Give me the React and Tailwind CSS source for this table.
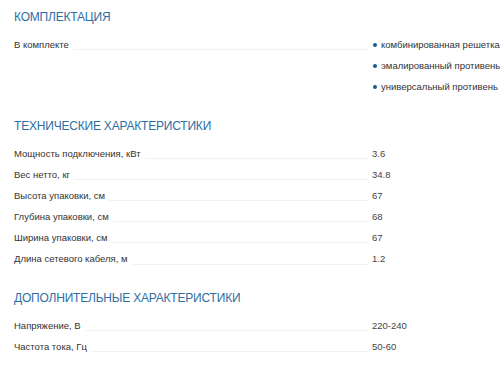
import React from "react";

const sections = [
  {
    title: "Комплектация",
    rows: [
      {
        label: "В комплекте",
        list: [
          "комбинированная решетка",
          "эмалированный противень",
          "универсальный противень",
        ],
      },
    ],
  },
  {
    title: "Технические характеристики",
    rows: [
      { label: "Мощность подключения, кВт", value: "3.6" },
      { label: "Вес нетто, кг", value: "34.8" },
      { label: "Высота упаковки, см", value: "67" },
      { label: "Глубина упаковки, см", value: "68" },
      { label: "Ширина упаковки, см", value: "67" },
      { label: "Длина сетевого кабеля, м", value: "1.2" },
    ],
  },
  {
    title: "Дополнительные характеристики",
    rows: [
      { label: "Напряжение, В", value: "220-240" },
      { label: "Частота тока, Гц", value: "50-60" },
    ],
  },
];

const Row = ({ row }) => (
  <div className="flex items-start">
    <div className="w-[354px] h-[21.2px] flex items-center shrink-0">
      <span className="whitespace-nowrap pr-[4px]">{row.label}</span>
      <div className="flex-1 h-px bg-[#f2f2f2] mt-[9px]" />
    </div>
    <div className="pl-[4px] flex flex-col">
      {row.list ? (
        row.list.map((item) => (
          <div key={item} className="h-[21.2px] flex items-center whitespace-nowrap">
            <span className="w-[4px] h-[4px] rounded-full bg-[#1a5a8f] ml-[1px] mr-[4px]" />
            {item}
          </div>
        ))
      ) : (
        <div className="h-[21.2px] flex items-center text-[#444]">{row.value}</div>
      )}
    </div>
  </div>
);

const App = () => {
  return (
    <div className="w-[500px] h-[368px] overflow-hidden bg-white pl-[14px] pt-[9px] font-['Liberation_Sans',Arial,sans-serif] text-[9.5px] text-[#333]">
      {sections.map((s, i) => (
        <div key={s.title} className={i > 0 ? "mt-[19.5px]" : ""}>
          <h2 className="h-[16px] leading-[16px] text-[12px] uppercase text-[#2f6ea3] tracking-[-0.2px] mb-[9.5px]">
            {s.title}
          </h2>
          {s.rows.map((r) => (
            <Row key={r.label} row={r} />
          ))}
        </div>
      ))}
    </div>
  );
};

export default App;
